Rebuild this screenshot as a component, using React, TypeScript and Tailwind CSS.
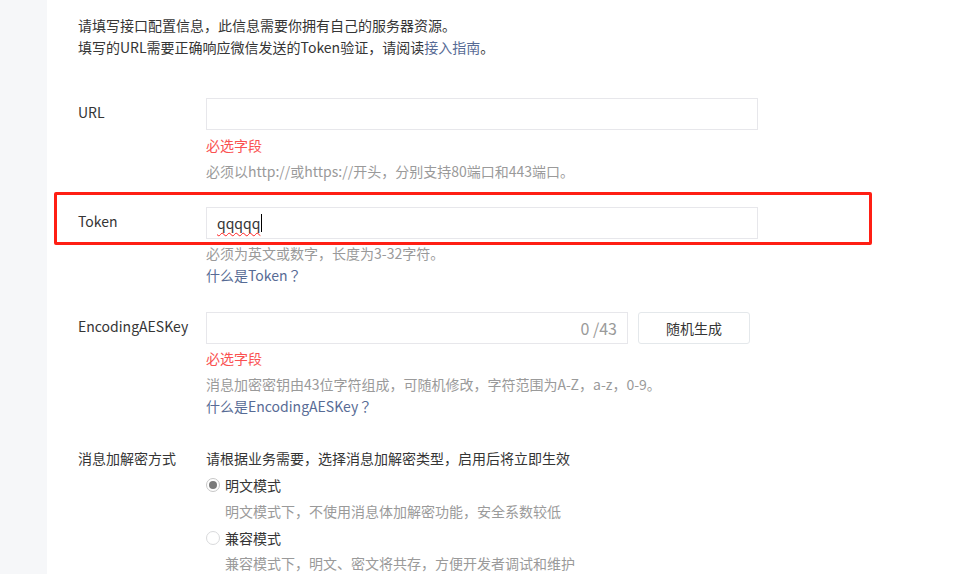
import React from "react";

const font = "font-['Microsoft_YaHei','Noto_Sans_CJK_SC',sans-serif]";

// full-width question mark sits centred in the reference
function Q() {
  return <span className="font-['Noto_Sans_CJK_TC',sans-serif]">？</span>;
}

function Radio({ checked }: { checked?: boolean }) {
  return (
    <span
      className={`flex h-[14px] w-[14px] items-center justify-center rounded-full border ${
        checked ? "border-[#c7c7c7]" : "border-[#d9dadc]"
      } bg-white`}
    >
      {checked && <span className="h-[8px] w-[8px] rounded-full bg-[#7b7b7b]" />}
    </span>
  );
}

export default function App() {
  return (
    <div className={`flex h-[574px] w-[960px] overflow-hidden bg-white text-[14px] text-[#353535] ${font}`}>
      <aside className="w-[47px] shrink-0 bg-[#f6f7f9]" />

      <main className="relative flex-1 pl-[31px] pt-[14px]">
        {/* intro */}
        <div className="leading-[22px]">
          <p>请填写接口配置信息，此信息需要你拥有自己的服务器资源。</p>
          <p>
            填写的URL需要正确响应微信发送的Token验证，请阅读
            <span className="text-[#576b95]">接入指南</span>。
          </p>
        </div>

        {/* URL */}
        <div className="mt-[40px] flex">
          <div className="w-[128px] pt-[3px] leading-[22px]">URL</div>
          <div>
            <div className="h-[32px] w-[552px] border border-[#e7e7eb]" />
            <p className="mt-[4px] leading-[22px] text-[#fa5151]">必选字段</p>
            <p className="mt-[4px] leading-[22px] text-[#9a9a9a]">
              必须以http://或https://开头，分别支持80端口和443端口。
            </p>
          </div>
        </div>

        {/* Token */}
        <div className="mt-[25px] flex">
          <div className="w-[128px] pt-[3px] leading-[22px]">Token</div>
          <div>
            <div className="flex h-[32px] w-[552px] items-center border border-[#e7e7eb] px-[10px]">
              <span className="leading-[22px] underline decoration-[#ff2020] decoration-wavy decoration-1 underline-offset-[3px]">
                qqqqq
              </span>
              <span className="ml-px h-[18px] w-px bg-[#000]" />
            </div>
            <p className="mt-[3px] leading-[22px] text-[#9a9a9a]">必须为英文或数字，长度为3-32字符。</p>
            <p className="leading-[22px] text-[#576b95]">
              什么是Token<Q />
            </p>
          </div>
        </div>

        {/* EncodingAESKey */}
        <div className="mt-[26px] flex">
          <div className="w-[128px] pt-[3px] leading-[22px]">EncodingAESKey</div>
          <div>
            <div className="flex items-center">
              <div className="flex h-[32px] w-[422px] items-center justify-end border border-[#e7e7eb] pr-[10px] text-[16px] text-[#9a9a9a]">
                0 /43
              </div>
              <button className="ml-[10px] h-[32px] w-[112px] rounded-[3px] border border-[#e4e8eb] bg-white text-[#353535]">
                随机生成
              </button>
            </div>
            <p className="mt-[3px] leading-[22px] text-[#fa5151]">必选字段</p>
            <p className="mt-[4px] leading-[22px] text-[#9a9a9a]">
              消息加密密钥由43位字符组成，可随机修改，字符范围为A-Z，a-z，0-9。
            </p>
            <p className="leading-[22px] text-[#576b95]">
              什么是EncodingAESKey<Q />
            </p>
          </div>
        </div>

        {/* encryption mode */}
        <div className="mt-[30px] flex">
          <div className="w-[128px] leading-[22px]">消息加解密方式</div>
          <div>
            <p className="leading-[22px]">请根据业务需要，选择消息加解密类型，启用后将立即生效</p>
            <div className="mt-[5px] flex items-center leading-[22px]">
              <Radio checked />
              <span className="ml-[5px]">明文模式</span>
            </div>
            <p className="mt-[4px] pl-[19px] leading-[22px] text-[#9a9a9a]">
              明文模式下，不使用消息体加解密功能，安全系数较低
            </p>
            <div className="mt-[5px] flex items-center leading-[22px]">
              <Radio />
              <span className="ml-[5px]">兼容模式</span>
            </div>
            <p className="mt-[3px] pl-[19px] leading-[22px] text-[#9a9a9a]">
              兼容模式下，明文、密文将共存，方便开发者调试和维护
            </p>
          </div>
        </div>

        {/* annotation box over the Token row */}
        <div className="pointer-events-none absolute left-[7px] top-[192px] h-[53px] w-[818px] rounded-[2px] border-[3px] border-[#ff1f14]" />
      </main>
    </div>
  );
}
